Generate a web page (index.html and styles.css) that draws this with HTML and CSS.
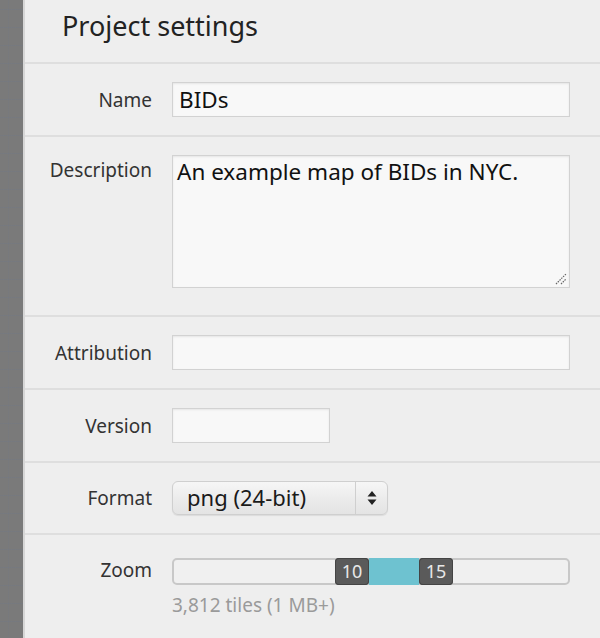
FILE: index.html
```html
<!DOCTYPE html>
<html>
<head>
<meta charset="utf-8">
<link rel="stylesheet" href="styles.css">
</head>
<body>
<div class="strip"></div>
<div class="panel">
  <div class="header"><h1 class="title">Project settings</h1></div>
  <div class="row">
    <label class="label">Name</label>
    <div class="field"><div class="input wide">BIDs</div></div>
  </div>
  <div class="row row-desc">
    <label class="label label-top">Description</label>
    <div class="field">
      <div class="textarea">An example map of BIDs in NYC.
        <svg class="grip" width="12" height="12" viewBox="0 0 12 12"><path d="M1 11 L11 1 M6 11 L11 6" stroke="#666" stroke-width="1.2" stroke-dasharray="1.5 1"/></svg>
      </div>
    </div>
  </div>
  <div class="row">
    <label class="label">Attribution</label>
    <div class="field"><div class="input wide"></div></div>
  </div>
  <div class="row">
    <label class="label">Version</label>
    <div class="field"><div class="input short"></div></div>
  </div>
  <div class="row">
    <label class="label">Format</label>
    <div class="field">
      <div class="select">
        <span class="select-text">png (24-bit)</span>
        <span class="select-arrows">
          <svg width="10" height="18" viewBox="0 0 10 18"><path d="M5 2 L9.5 7.5 H0.5 Z M5 16 L9.5 10.5 H0.5 Z" fill="#222"/></svg>
        </span>
      </div>
    </div>
  </div>
  <div class="row row-zoom">
    <label class="label">Zoom</label>
    <div class="field">
      <div class="slider">
        <div class="slider-left"></div>
        <div class="handle">10</div>
        <div class="range"></div>
        <div class="handle">15</div>
      </div>
      <div class="hint">3,812 tiles (1 MB+)</div>
    </div>
  </div>
</div>
</body>
</html>
```
FILE: styles.css
```css
html, body {
  margin: 0;
  padding: 0;
  height: 100%;
}
body {
  display: flex;
  background: #eeeeee;
  font-family: "Noto Sans", "Open Sans", sans-serif;
  color: #222;
  overflow: hidden;
}
.strip {
  width: 23px;
  flex: none;
  background-color: #7a7a7a;
  background-image:
    linear-gradient(rgba(110,120,140,0.25) 1px, transparent 1px),
    linear-gradient(90deg, rgba(110,120,140,0.18) 1px, transparent 1px);
  background-size: 18px 18px;
  background-position: 0 9px, 8px 0;
  border-right: 2px solid #d6d6d6;
}
.panel {
  flex: 1;
  display: flex;
  flex-direction: column;
}
.header {
  height: 62px;
  padding-left: 37px;
  display: flex;
  align-items: center;
}
.title {
  margin: 0;
  font-weight: normal;
  font-size: 27px;
  color: #222;
  position: relative;
  top: -6px;
}
.row {
  border-top: 2px solid #dedede;
  display: grid;
  grid-template-columns: 127px 1fr;
  column-gap: 20px;
  align-items: center;
  padding: 18px 0;
}
.row-desc {
  align-items: start;
  padding-bottom: 27px;
}
.row-zoom {
  align-items: start;
  padding-top: 23px;
}
.label {
  text-align: right;
  font-size: 19px;
  color: #333;
}
.label-top {
  padding-top: 2px;
}
.row-zoom .label {
  margin-top: -1px;
}
.input, .textarea {
  box-sizing: border-box;
  background: #f8f8f8;
  border: 1px solid #d2d2d2;
  box-shadow: inset 0 1px 2px rgba(0,0,0,0.08);
  font-size: 22.5px;
  color: #111;
}
.input {
  height: 35px;
  line-height: 33px;
  padding: 0 6px;
}
.wide { width: 398px; }
.short { width: 158px; }
.textarea {
  width: 398px;
  height: 133px;
  padding: 0 4px;
  line-height: 32px;
  position: relative;
}
.grip {
  position: absolute;
  right: 2px;
  bottom: 2px;
}
.select {
  box-sizing: border-box;
  width: 216px;
  height: 34px;
  border: 1px solid #cfcfcf;
  border-radius: 6px;
  background: linear-gradient(#f6f6f6, #ececec 50%, #e4e4e4);
  box-shadow: 0 1px 1px rgba(0,0,0,0.08);
  display: flex;
  align-items: stretch;
}
.select-text {
  flex: 1;
  padding-left: 14px;
  font-size: 22px;
  line-height: 31px;
  color: #1a1a1a;
  border-right: 1px solid #cfcfcf;
}
.select-arrows {
  width: 31px;
  display: flex;
  align-items: center;
  justify-content: center;
}
.slider {
  box-sizing: border-box;
  width: 398px;
  height: 27px;
  border: 2px solid #c8c8c8;
  border-radius: 5px;
  background: #f0f0f0;
  display: flex;
  align-items: stretch;
}
.slider-left {
  width: 161px;
}
.handle {
  width: 34px;
  background: #5a5a5a;
  border-radius: 4px;
  margin: -2px 0;
  color: #e8e8e8;
  font-size: 18px;
  line-height: 27px;
  text-align: center;
  box-shadow: inset 0 0 0 1px #444;
}
.range {
  width: 50px;
  background: #6ec2d0;
  margin: -2px 0;
}
.hint {
  margin-top: 7px;
  font-size: 19px;
  color: #9a9a9a;
}
```
